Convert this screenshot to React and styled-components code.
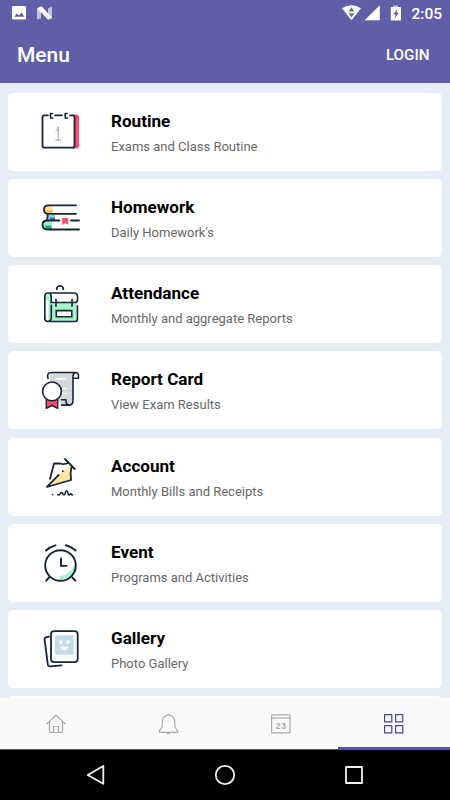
import React, { useState } from 'react';
import styled, { createGlobalStyle } from 'styled-components';

const GlobalStyle = createGlobalStyle`
  * {
    box-sizing: border-box;
  }

  body {
    margin: 0;
    font-family: Roboto, 'Liberation Sans', sans-serif;
  }
`;

const Screen = styled.div`
  display: flex;
  flex-direction: column;
  width: 450px;
  height: 800px;
  overflow: hidden;
  background-color: #e6edf7;
`;

const Header = styled.header`
  flex: none;
  height: 83px;
  color: #fff;
  background-color: #5f5fa7;
`;

const StatusBar = styled.div`
  display: flex;
  align-items: center;
  justify-content: space-between;
  height: 26px;
  padding: 0 8px 0 12px;
`;

const StatusGroup = styled.div`
  display: flex;
  align-items: center;
`;

const StatusSvg = styled.svg`
  display: block;
  width: ${(props) => props.$width}px;
  height: 16px;
`;

const Clock = styled.span`
  margin-left: 10px;
  padding-top: 2px;
  font-size: 15.5px;
  font-weight: 500;
  line-height: 18px;
`;

const TitleBar = styled.div`
  display: flex;
  align-items: center;
  justify-content: space-between;
  height: 57px;
  padding: 1px 20.5px 0 17px;
`;

const Title = styled.h1`
  margin: 0;
  font-size: 21px;
  font-weight: 500;
  line-height: 28px;
`;

const LoginButton = styled.button`
  padding: 0;
  border: none;
  background: none;
  color: #fff;
  font-family: inherit;
  font-size: 15.2px;
  font-weight: 500;
  line-height: 18px;
  cursor: pointer;
`;

const MenuList = styled.main`
  display: flex;
  flex: 1;
  flex-direction: column;
  gap: 8.25px;
  min-height: 0;
  padding: 9.5px 8px 0;
  overflow: hidden;
`;

const Card = styled.div`
  display: flex;
  flex: none;
  align-items: center;
  height: 78px;
  padding-left: 22px;
  border-radius: 5px;
  background-color: #fff;
`;

const CardIcon = styled.svg`
  display: block;
  flex: none;
  width: 60px;
  height: 60px;
  fill: none;
  stroke: #182437;
  stroke-width: 1.8;
  stroke-linecap: round;
  stroke-linejoin: round;
`;

const CardText = styled.div`
  margin-left: 21px;
  padding-top: 3px;
  white-space: nowrap;
`;

const CardTitle = styled.h2`
  margin: 0;
  color: #000;
  font-size: 17.1px;
  font-weight: 700;
  line-height: 24px;
`;

const CardDetail = styled.p`
  margin: 3px 0 0;
  color: #686868;
  font-size: 13px;
  line-height: 22px;
`;

const TabBar = styled.nav`
  display: flex;
  flex: none;
  height: 52px;
  background-color: #fafafa;
`;

const Tab = styled.button`
  display: flex;
  flex: 1;
  align-items: flex-start;
  justify-content: center;
  padding: 15px 0 0;
  border: none;
  border-bottom: ${(props) => (props.$active ? '3px solid #5456a8' : '1px solid #555')};
  background: none;
  color: ${(props) => (props.$active ? '#4642a6' : '#a9a9a9')};
  cursor: pointer;
`;

const TabSvg = styled.svg`
  display: block;
  width: 22px;
  height: 22px;
  fill: none;
  stroke: currentColor;
  stroke-width: 1.2;
  stroke-linejoin: round;
`;

const DateText = styled.text`
  fill: currentColor;
  stroke: none;
  font-size: 8.5px;
  font-weight: 700;
  letter-spacing: 0.8px;
`;

const SystemBar = styled.footer`
  display: flex;
  flex: none;
  align-items: center;
  justify-content: center;
  gap: 105px;
  height: 50px;
  background-color: #000;
`;

const SystemSvg = styled.svg`
  display: block;
  width: 24px;
  height: 24px;
  fill: none;
  stroke: #f0f0f0;
  stroke-width: 1.8;
  stroke-linejoin: round;
`;

const RoutineIcon = () => (
  <CardIcon viewBox="0 1.5 60 60">
    <path d="M43 14h3q3 0 3 3v28q0 3-3 3h-4z" fill="#ff4b6e" stroke="none" />
    <path d="M18 14.8h-3.5q-2 0-2 2v28.4q0 2 2 2h28q2 0 2-2V16.8q0-2-2-2H40M25 14.8h7" fill="#fff" />
    <path d="M22.5 13h-2v4.5h2.3M37.2 13h-2v4.5h2.3" strokeWidth="1.6" />
    <path d="M26 30.5q2-1.5 2.2-4.2v13.2M25.5 39.5h5.2" stroke="#85858d" strokeWidth=".8" />
  </CardIcon>
);

const HomeworkIcon = () => (
  <CardIcon viewBox="0 0 60 60">
    <path d="M18 17.5h5l-1 8h-4q-4 0-4-4t4-4z" fill="#ffe7a3" stroke="none" />
    <path d="M15 22h8l-1 4h-4z" fill="#f3c552" stroke="none" />
    <path d="M18 27h7v5h-7z" fill="#9bc8e4" stroke="none" />
    <path d="M20 29.5h5V32h-5z" fill="#3476aa" stroke="none" />
    <path d="M17 32.5h5v8.8h-5q-4.5 0-4.5-4.4t4.5-4.4z" fill="#a5f3c8" stroke="none" />
    <path d="M14 37.5h7.5v3.8H17z" fill="#17b07b" stroke="none" />
    <path d="M46 17.3H18.5q-4.5 0-4.5 4.3t4.5 4.2H46M17.5 26v3.5q0 2.4-1.5 3M29.5 32.5H17.5q-5 0-5 4.5t5 4.5H49M41 32.5h8" />
    <path d="M32.2 30h6v7l-3-2-3 2z" fill="#ff4b6e" stroke="none" />
  </CardIcon>
);

const AttendanceIcon = () => (
  <CardIcon viewBox="0 -.3 60 60">
    <path d="M14.7 21h31.6v26.2H16.5q-1.8 0-1.8-2z" fill="#a5f3c8" stroke="none" />
    <path d="M21 20h23.5q2.7 0 2.7 3v5q0 1-1 1H21z" fill="#fff" stroke="none" />
    <path d="M15.5 26h3V46h-3z" fill="#fff" stroke="none" />
    <path d="M17.8 18.7H44q3.5 0 3.5 3.7v3.2q0 2.6-2.6 2.6H21M18 47.2q-3.2 0-3.2-3V22.5q0-3.8 3.2-3.8t3.2 3.8v5M21.3 31v11.5q0 4.5-3.3 4.7h27.2q2.2 0 2.2-2.2V31.5" strokeWidth="1.6" />
    <path d="M26.7 15v-.2a3.3 3.3 0 016.6 0v.2" />
    <path d="M26 25v7M42 25v7" strokeWidth="1.6" />
    <path d="M26.3 36.3h15.5v6.1H26.3z" fill="#fff" strokeWidth="1.6" strokeLinejoin="miter" />
  </CardIcon>
);

const ReportIcon = () => (
  <CardIcon viewBox="0 0 60 60">
    <path d="M20 12.3h23v28.5q0 4.3-3.5 4.3h-8L20 31z" fill="#d5d8dc" stroke="none" />
    <path d="M18 18.3q-1.5-5.8 3.5-5.8h24q3 0 3 3v2.7H43M46 12.7q-3 0-3 3.8v24q0 4.6-3.8 4.6H31.5M31.5 39.8H36v1.5q0 3.8 3.5 3.8" strokeWidth="1.6" />
    <path d="M26 18.8h9M31 28.5h5.5M33 33.5h3.5" stroke="#fff" strokeWidth="1.5" />
    <path d="M16.3 39.5h11.4v8.8L22 45.5l-5.7 2.8z" fill="#ff4b6e" strokeWidth="1.4" />
    <circle cx="22" cy="31.4" r="9.4" fill="#fff" strokeWidth="1.6" />
  </CardIcon>
);

const AccountIcon = () => (
  <CardIcon viewBox="0 .5 60 60">
    <path d="M17 40.3 32.7 25 40 18.5l1.7 14.7z" fill="#ffe8a6" stroke="none" />
    <path d="M20 32.3l4-15.3h6.2q4 1.3 8.3-.5M17 40.5l24-7q-1-7.6.5-13M17.2 40.2l11.6-11.8M32.8 24.7h.1M35 12.5l9.7 10" />
    <path d="M22.7 48.3h.1M27.8 48.4c3.2.2 2-2.4 3.7-2.4s1 2.4 2.6 2.4.9-4.2 2.5-4.2.7 4.4 2.6 4.4c1.2 0 .9-1.2 1.7-1.2s.6 1 1.6 1" strokeWidth="1.6" />
  </CardIcon>
);

const EventIcon = () => (
  <CardIcon viewBox="0 .5 60 60">
    <path d="M44.8 30.5q2.4 14.8-15 16.3v-3.2q12-1.8 15-13.1z" fill="#a5f3c8" stroke="none" />
    <circle cx="30.5" cy="33" r="15.3" strokeWidth="1.9" />
    <path d="M31 26v7.4h5.5M16 18q4-3.8 9.5-5.2M35.8 12.8q6 1.4 9.8 5.2M19 45l-2.8 3.2M42.3 45l3 3.2" strokeWidth="1.9" />
  </CardIcon>
);

const GalleryIcon = () => (
  <CardIcon viewBox="0 .8 60 60">
    <path d="M19 18.5l-2.6.4q-2 .5-1.8 2.6l3.2 24.7q.4 2.2 2.5 2l11.2-1" />
    <rect x="21" y="13" width="26.7" height="31" rx="3.2" fill="#fff" />
    <path d="M25 17h18.7v19.6H25z" fill="#c2dced" stroke="none" />
    <g fill="#fff" stroke="none">
      <circle cx="31" cy="23.9" r="1.9" />
      <circle cx="38" cy="23.9" r="1.9" />
      <path d="M30.5 28q4 1.3 7.8 0-.4 4-3.9 4t-3.9-4z" />
    </g>
  </CardIcon>
);

const menuItems = [
  { title: 'Routine', detail: 'Exams and Class Routine', Icon: RoutineIcon },
  { title: 'Homework', detail: "Daily Homework's", Icon: HomeworkIcon },
  { title: 'Attendance', detail: 'Monthly and aggregate Reports', Icon: AttendanceIcon },
  { title: 'Report Card', detail: 'View Exam Results', Icon: ReportIcon },
  { title: 'Account', detail: 'Monthly Bills and Receipts', Icon: AccountIcon },
  { title: 'Event', detail: 'Programs and Activities', Icon: EventIcon },
  { title: 'Gallery', detail: 'Photo Gallery', Icon: GalleryIcon }
];

const tabs = [
  {
    id: 'home',
    drawing: (
      <>
        <path d="M1.7 11 11 2.2l9.3 8.8" />
        <path d="M4.5 8.5V18q0 1.5 1.5 1.5h10q1.5 0 1.5-1.5V8.5" />
        <path d="M8.6 19.5v-6h4.8v6" />
      </>
    )
  },
  {
    id: 'notices',
    drawing: (
      <>
        <path d="M9 2.5q1.5-1.8 3 0 4.7 1 4.7 6v4q0 2.5 2.8 5v1.8h-18v-1.8q2.8-2.5 2.8-5v-4q0-5 4.7-6z" />
        <path d="M8.8 20.4h3.4" />
      </>
    )
  },
  {
    id: 'calendar',
    drawing: (
      <>
        <rect x="1.6" y="1.8" width="18.4" height="18" rx="1" />
        <path d="M1.8 5h18" />
        <DateText x="11.3" y="15.6" textAnchor="middle">23</DateText>
      </>
    )
  },
  {
    id: 'menu',
    drawing: (
      <>
        <rect x="1.6" y="1.6" width="7.2" height="7.3" />
        <rect x="12.6" y="1.6" width="7.2" height="7.3" />
        <rect x="1.6" y="12.6" width="7.2" height="7.3" />
        <rect x="12.6" y="12.6" width="7.2" height="7.3" />
      </>
    )
  }
];

const App = () => {
  const [activeTab, setActiveTab] = useState('menu');

  return (
    <Screen>
      <GlobalStyle />
      <Header>
        <StatusBar>
          <StatusGroup>
            <StatusSvg $width={42} viewBox="0 0 42 16">
              <rect y="1" width="14" height="13.5" rx="1.3" fill="#fff" />
              <path d="M2.2 11.8 5 8.5l2 2 2.5-3.2 2.7 4.5z" fill="#5f5fa7" />
              <path d="M25 3.5l4-2v12l-4 1zM36 3.5l4-2v11.7l-4 1.5z" fill="#c3c3df" />
              <path d="M25 3.5l4.5-2.2L40 12.6l-4 2z" fill="#fff" />
            </StatusSvg>
          </StatusGroup>
          <StatusGroup>
            <StatusSvg $width={60} viewBox="0 0 60 16">
              <path d="M1 3.2q9-5.7 19 0L10.5 15.2z" fill="#fff" />
              <path d="M10.5 2.2l3.1 4.2H7.4zM7.4 8.3h6.2l-3.1 4.2z" fill="#777" />
              <path d="M23.5 15.2h15.3V.3z" fill="#fff" />
              <path d="M52 .5h5v2h-5z" fill="#c3c3df" />
              <rect x="49.8" y="2" width="10.2" height="13.5" rx=".8" fill="#fff" />
              <path d="M56.1 3.7 52.5 9.2h2l-.6 4.3 3.8-5.7h-2.2z" fill="#5f5fa7" />
            </StatusSvg>
            <Clock>2:05</Clock>
          </StatusGroup>
        </StatusBar>
        <TitleBar>
          <Title>Menu</Title>
          <LoginButton type="button">LOGIN</LoginButton>
        </TitleBar>
      </Header>

      <MenuList>
        {menuItems.map(({ title, detail, Icon }) => (
          <Card key={title}>
            <Icon />
            <CardText>
              <CardTitle>{title}</CardTitle>
              <CardDetail>{detail}</CardDetail>
            </CardText>
          </Card>
        ))}
        {/* The next card only peeks out above the tabs */}
        <Card />
      </MenuList>

      <TabBar>
        {tabs.map((tab) => (
          <Tab
            key={tab.id}
            type="button"
            aria-label={tab.id}
            $active={tab.id === activeTab}
            onClick={() => setActiveTab(tab.id)}
          >
            <TabSvg viewBox="0 0 22 22">{tab.drawing}</TabSvg>
          </Tab>
        ))}
      </TabBar>

      <SystemBar>
        <SystemSvg viewBox="0 0 24 24">
          <path d="M19.3 3v17.8L3.7 12z" />
        </SystemSvg>
        <SystemSvg viewBox="0 0 24 24">
          <circle cx="12" cy="12" r="9.2" />
        </SystemSvg>
        <SystemSvg viewBox="0 0 24 24">
          <rect x="4" y="4" width="16" height="16" />
        </SystemSvg>
      </SystemBar>
    </Screen>
  );
};

export default App;
